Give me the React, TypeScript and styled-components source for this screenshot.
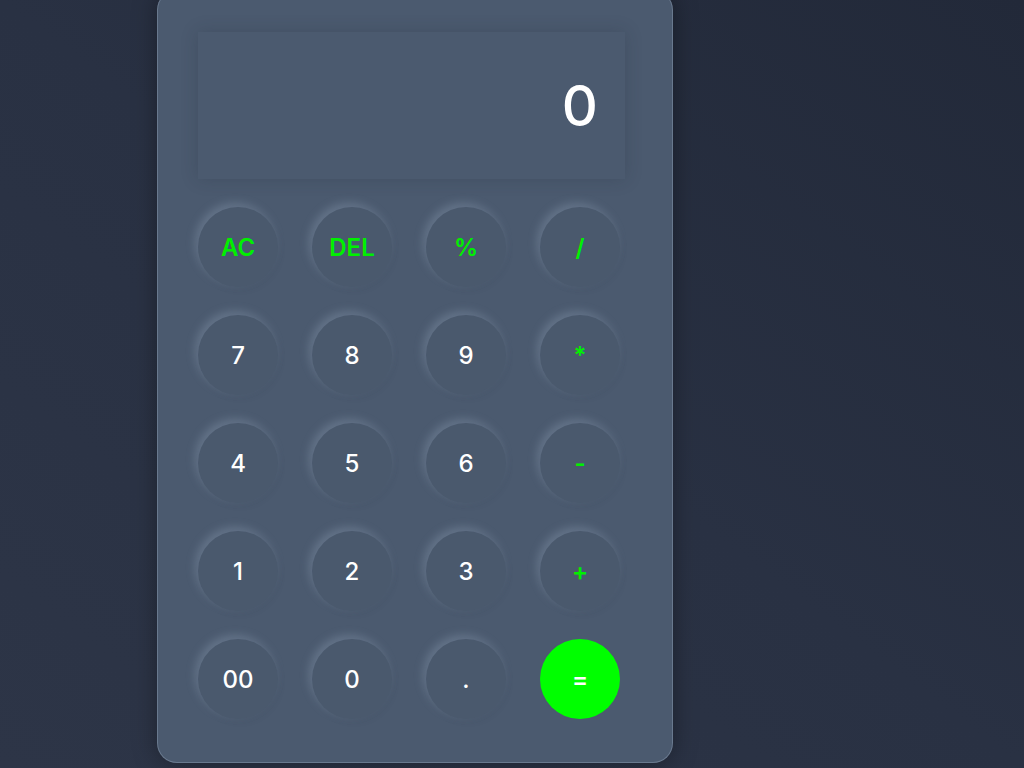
import React from "react";
import styled, { createGlobalStyle } from "styled-components";

const Global = createGlobalStyle`
  html, body { margin: 0; padding: 0; }
  body {
    width: 1024px;
    height: 768px;
    overflow: hidden;
    background: linear-gradient(to top right, #2d3547 0%, #293143 50%, #222939 100%);
    font-family: Inter, "Open Sans", sans-serif;
  }
`;

const Page = styled.div`
  display: flex;
  align-items: flex-start;
  padding-left: 157px;
  height: 768px;
`;

const Card = styled.div`
  margin-top: -10px;
  width: 516px;
  height: 773px;
  box-sizing: border-box;
  padding: 41px 40px;
  background: #4b5a6f;
  border: 1px solid rgba(150, 168, 190, 0.4);
  border-radius: 20px;
  box-shadow: 0 0 24px rgba(0, 0, 0, 0.35);
  display: flex;
  flex-direction: column;
  gap: 28px;
`;

const Display = styled.div`
  width: 427px;
  height: 147px;
  box-sizing: border-box;
  padding-right: 27px;
  display: flex;
  align-items: center;
  justify-content: flex-end;
  background: #4b5a6f;
  box-shadow: 0 0 16px rgba(30, 40, 55, 0.22);
  color: #ffffff;
  font-size: 56px;
  font-weight: 500;
`;

const Grid = styled.div`
  display: grid;
  grid-template-columns: repeat(4, 80px);
  column-gap: 34px;
  row-gap: 28px;
`;

const Key = styled.button<{ $accent?: boolean; $equal?: boolean }>`
  width: 80px;
  height: 80px;
  border-radius: 50%;
  border: none;
  padding: 0;
  display: flex;
  align-items: center;
  justify-content: center;
  font-family: Inter, "Open Sans", sans-serif;
  font-size: 24px;
  font-weight: ${(p) => (p.$accent || p.$equal ? 600 : 500)};
  color: ${(p) => (p.$accent ? "#00f000" : "#ffffff")};
  background: ${(p) => (p.$equal ? "#00ff00" : "#4a596d")};
  box-shadow: ${(p) =>
    p.$equal
      ? "none"
      : "-3px -4px 10px rgba(170, 188, 210, 0.28), 2px 3px 6px rgba(50, 60, 76, 0.08)"};
`;

const keys: { label: string; accent?: boolean; equal?: boolean }[] = [
  { label: "AC", accent: true },
  { label: "DEL", accent: true },
  { label: "%", accent: true },
  { label: "/", accent: true },
  { label: "7" },
  { label: "8" },
  { label: "9" },
  { label: "*", accent: true },
  { label: "4" },
  { label: "5" },
  { label: "6" },
  { label: "-", accent: true },
  { label: "1" },
  { label: "2" },
  { label: "3" },
  { label: "+", accent: true },
  { label: "00" },
  { label: "0" },
  { label: "." },
  { label: "=", equal: true },
];

export default function App() {
  return (
    <>
      <Global />
      <Page>
        <Card>
          <Display>0</Display>
          <Grid>
            {keys.map((k) => (
              <Key key={k.label} $accent={k.accent} $equal={k.equal}>
                {k.label}
              </Key>
            ))}
          </Grid>
        </Card>
      </Page>
    </>
  );
}
